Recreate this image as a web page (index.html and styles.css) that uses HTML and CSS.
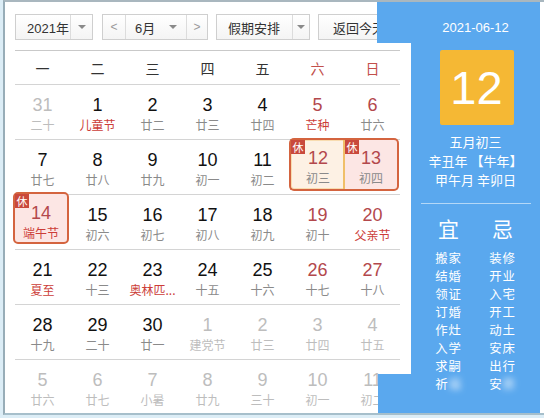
FILE: index.html
```html
<!DOCTYPE html>
<html lang="zh-CN">
<head>
<meta charset="utf-8">
<title>万年历</title>
<link rel="stylesheet" href="styles.css">
</head>
<body>
<div class="frame">
  <div class="cal">
    <div class="toolbar">
      <div class="sel year"><span class="val">2021年</span><span class="drop"><i class="tri"></i></span></div>
      <div class="sel month"><span class="nav">&lt;</span><span class="val">6月<i class="tri"></i></span><span class="nav">&gt;</span></div>
      <div class="sel holsel"><span class="val">假期安排</span><span class="drop"><i class="tri"></i></span></div>
      <div class="sel today"><span class="val">返回今天</span></div>
    </div>
    <div class="weekhead">
      <span>一</span><span>二</span><span>三</span><span>四</span><span>五</span><span class="red">六</span><span class="red">日</span>
    </div>
    <div class="week">
      <div class="cell other"><span class="num">31</span><span class="lunar">二十</span></div>
      <div class="cell"><span class="num">1</span><span class="lunar fest">儿童节</span></div>
      <div class="cell"><span class="num">2</span><span class="lunar">廿二</span></div>
      <div class="cell"><span class="num">3</span><span class="lunar">廿三</span></div>
      <div class="cell"><span class="num">4</span><span class="lunar">廿四</span></div>
      <div class="cell we"><span class="num">5</span><span class="lunar fest">芒种</span></div>
      <div class="cell we"><span class="num">6</span><span class="lunar">廿六</span></div>
    </div>
    <div class="week">
      <div class="cell"><span class="num">7</span><span class="lunar">廿七</span></div>
      <div class="cell"><span class="num">8</span><span class="lunar">廿八</span></div>
      <div class="cell"><span class="num">9</span><span class="lunar">廿九</span></div>
      <div class="cell"><span class="num">10</span><span class="lunar">初一</span></div>
      <div class="cell"><span class="num">11</span><span class="lunar">初二</span></div>
      <div class="cell we hb hb-l cur"><span class="badge">休</span><span class="num">12</span><span class="lunar">初三</span></div>
      <div class="cell we hb hb-r"><span class="badge">休</span><span class="num">13</span><span class="lunar">初四</span></div>
    </div>
    <div class="week">
      <div class="cell we hb hb-one"><span class="badge">休</span><span class="num">14</span><span class="lunar fest">端午节</span></div>
      <div class="cell"><span class="num">15</span><span class="lunar">初六</span></div>
      <div class="cell"><span class="num">16</span><span class="lunar">初七</span></div>
      <div class="cell"><span class="num">17</span><span class="lunar">初八</span></div>
      <div class="cell"><span class="num">18</span><span class="lunar">初九</span></div>
      <div class="cell we"><span class="num">19</span><span class="lunar">初十</span></div>
      <div class="cell we"><span class="num">20</span><span class="lunar fest">父亲节</span></div>
    </div>
    <div class="week">
      <div class="cell"><span class="num">21</span><span class="lunar fest">夏至</span></div>
      <div class="cell"><span class="num">22</span><span class="lunar">十三</span></div>
      <div class="cell"><span class="num">23</span><span class="lunar fest">奥林匹...</span></div>
      <div class="cell"><span class="num">24</span><span class="lunar">十五</span></div>
      <div class="cell"><span class="num">25</span><span class="lunar">十六</span></div>
      <div class="cell we"><span class="num">26</span><span class="lunar">十七</span></div>
      <div class="cell we"><span class="num">27</span><span class="lunar">十八</span></div>
    </div>
    <div class="week">
      <div class="cell"><span class="num">28</span><span class="lunar">十九</span></div>
      <div class="cell"><span class="num">29</span><span class="lunar">二十</span></div>
      <div class="cell"><span class="num">30</span><span class="lunar">廿一</span></div>
      <div class="cell other"><span class="num">1</span><span class="lunar">建党节</span></div>
      <div class="cell other"><span class="num">2</span><span class="lunar">廿三</span></div>
      <div class="cell other"><span class="num">3</span><span class="lunar">廿四</span></div>
      <div class="cell other"><span class="num">4</span><span class="lunar">廿五</span></div>
    </div>
    <div class="week">
      <div class="cell other"><span class="num">5</span><span class="lunar">廿六</span></div>
      <div class="cell other"><span class="num">6</span><span class="lunar">廿七</span></div>
      <div class="cell other"><span class="num">7</span><span class="lunar">小暑</span></div>
      <div class="cell other"><span class="num">8</span><span class="lunar">廿九</span></div>
      <div class="cell other"><span class="num">9</span><span class="lunar">三十</span></div>
      <div class="cell other"><span class="num">10</span><span class="lunar">初一</span></div>
      <div class="cell other"><span class="num">11</span><span class="lunar">初二</span></div>
    </div>
  </div>

  <div class="panel">
    <div class="pdate">2021-06-12</div>
    <div class="bigday">12</div>
    <div class="plunar">
      <div>五月初三</div>
      <div>辛丑年 【牛年】</div>
      <div>甲午月 辛卯日</div>
    </div>
    <div class="prule"></div>
    <div class="yiji">
      <div class="col">
        <div class="head">宜</div>
        <div class="item">搬家</div><div class="item">结婚</div><div class="item">领证</div><div class="item">订婚</div><div class="item">作灶</div><div class="item">入学</div><div class="item">求嗣</div>
        <div class="item">祈<span class="fade">福</span></div>
      </div>
      <div class="col">
        <div class="head">忌</div>
        <div class="item">装修</div><div class="item">开业</div><div class="item">入宅</div><div class="item">开工</div><div class="item">动土</div><div class="item">安床</div><div class="item">出行</div>
        <div class="item">安<span class="fade">葬</span></div>
      </div>
    </div>
  </div>
</div>
</body>
</html>
```

FILE: styles.css
```css
* { box-sizing: border-box; }

html, body {
  margin: 0;
  padding: 0;
}

body {
  width: 544px;
  height: 418px;
  overflow: hidden;
  background: #dcedf6;
  font-family: "Liberation Sans", Arial, "Noto Sans CJK SC", sans-serif;
  color: #111;
}

.frame {
  position: relative;
  margin-left: 3px;
  width: 541px;
  height: 415px;
  border-left: 2px solid #98adb8;
  border-top: 2px solid #a9b7bf;
  border-bottom: 2px solid #a6bfcb;
  background: #fff;
  overflow: hidden;
}

.cal {
  padding: 12px 0 0 10px;
}

/* toolbar */
.toolbar {
  display: flex;
  align-items: stretch;
  height: 26px;
  gap: 8px;
  font-size: 13px;
  color: #333;
}

.sel {
  display: flex;
  align-items: stretch;
  border: 1px solid #cfcfcf;
  background: linear-gradient(#ffffff, #f4f4f4);
}

.sel .val {
  display: flex;
  align-items: center;
}

.sel .drop {
  display: flex;
  align-items: center;
  justify-content: center;
  border-left: 1px solid #dcdcdc;
}

.tri {
  display: inline-block;
  width: 0;
  height: 0;
  border-left: 4px solid transparent;
  border-right: 4px solid transparent;
  border-top: 4px solid #8a8a8a;
}

.year { width: 78px; margin-right: 1px; }
.year .val { width: 55px; padding-left: 11px; }
.year .drop { width: 22px; }

.month { width: 106px; }
.month .nav {
  width: 23px;
  display: flex;
  align-items: center;
  justify-content: center;
  color: #9a9a9a;
  font-size: 12px;
}
.month .nav:first-child { border-right: 1px solid #dcdcdc; }
.month .nav:last-child { border-left: 1px solid #dcdcdc; width: 21px; }
.month .val {
  width: 60px;
  padding-left: 9px;
  justify-content: space-between;
  padding-right: 9px;
}

.holsel { width: 94px; }
.holsel .val { width: 76px; padding-left: 11px; }
.holsel .drop { width: 17px; }

.today { width: 82px; }
.today .val { padding-left: 14px; }

/* weekday header */
.weekhead {
  display: grid;
  grid-template-columns: repeat(7, 55px);
  width: 385px;
  height: 34px;
  margin-top: 10px;
  border-top: 1px solid #c9c9c9;
  font-size: 14px;
  color: #333;
  align-items: center;
  justify-items: center;
  font-family: "Noto Sans CJK SC", sans-serif;
}
.weekhead .red { color: #c2504c; }

/* weeks */
.week {
  display: grid;
  grid-template-columns: repeat(7, 55px);
  width: 385px;
  height: 55px;
  border-top: 1px solid #d4d4d4;
}

.cell {
  display: flex;
  flex-direction: column;
  align-items: center;
  padding-top: 10px;
}

.num {
  font-size: 18px;
  line-height: 20px;
  height: 20px;
  color: #111;
}

.lunar {
  font-size: 12px;
  line-height: 16px;
  margin-top: 2px;
  color: #8a8a8a;
  font-family: "Noto Sans CJK SC", sans-serif;
  white-space: nowrap;
}

.lunar.fest { color: #cc3d38; }
.we .num { color: #b3484c; }

.other .num, .other .lunar { color: #bdbdbd; }

/* holiday boxes */
.hb {
  position: relative;
  border: 2px solid #d4643f;
  background: #fce6e4;
}
.hb-one {
  border-radius: 5px;
  margin: -3px 1px 5px -2px;
  padding-top: 9px;
}
.hb-l {
  border-right: none;
  border-radius: 5px 0 0 5px;
  margin: -2px 0 3px -1px;
  padding-top: 8px;
}
.hb-r {
  border-left: none;
  border-radius: 0 5px 5px 0;
  margin: -2px 1px 3px 0;
  padding-top: 8px;
}
.cur {
  background: #fdf1e4;
  box-shadow: inset -2px 0 0 #f0bf68, inset 0 0 0 1px #f8dcb0;
}

.badge {
  position: absolute;
  top: 0;
  left: 0;
  width: 14px;
  height: 14px;
  background: #c9493c;
  color: #fff;
  font-size: 11px;
  line-height: 14px;
  text-align: center;
  font-family: "Noto Sans CJK SC", sans-serif;
}

/* right panel */
.panel {
  position: absolute;
  left: 406px;
  top: 0;
  width: 129px;
  height: 411px;
  background: #5aa8ee;
  color: #fff;
  display: flex;
  flex-direction: column;
  align-items: center;
  padding-top: 18px;
}
.panel::before {
  content: "";
  position: absolute;
  left: -34px;
  top: 0;
  width: 34px;
  height: 41px;
  background: #5aa8ee;
}
.panel::after {
  content: "";
  position: absolute;
  left: -33px;
  bottom: 0;
  width: 33px;
  height: 39px;
  background: #5aa8ee;
}

.pdate {
  font-size: 13px;
  line-height: 16px;
}

.bigday {
  margin-top: 14px;
  width: 74px;
  height: 75px;
  background: #f5b834;
  border-radius: 2px;
  font-size: 47px;
  line-height: 75px;
  text-align: center;
  margin-left: 2px;
}

.plunar {
  margin-top: 7px;
  font-size: 13px;
  line-height: 19px;
  text-align: center;
  font-family: "Noto Sans CJK SC", sans-serif;
}

.prule {
  margin-top: 14px;
  width: 110px;
  height: 1px;
  background: rgba(255, 255, 255, 0.55);
}

.yiji {
  display: grid;
  grid-template-columns: 54px 54px;
  margin-top: 12px;
  font-family: "Noto Sans CJK SC", sans-serif;
  text-align: center;
}
.yiji .head {
  font-size: 21px;
  line-height: 24px;
  margin-bottom: 9px;
}
.yiji .item {
  font-size: 12.4px;
  line-height: 18px;
  height: 18px;
  letter-spacing: 0.8px;
}

.fade {
  color: #fff;
  filter: blur(3px);
  opacity: 0.9;
}
```
